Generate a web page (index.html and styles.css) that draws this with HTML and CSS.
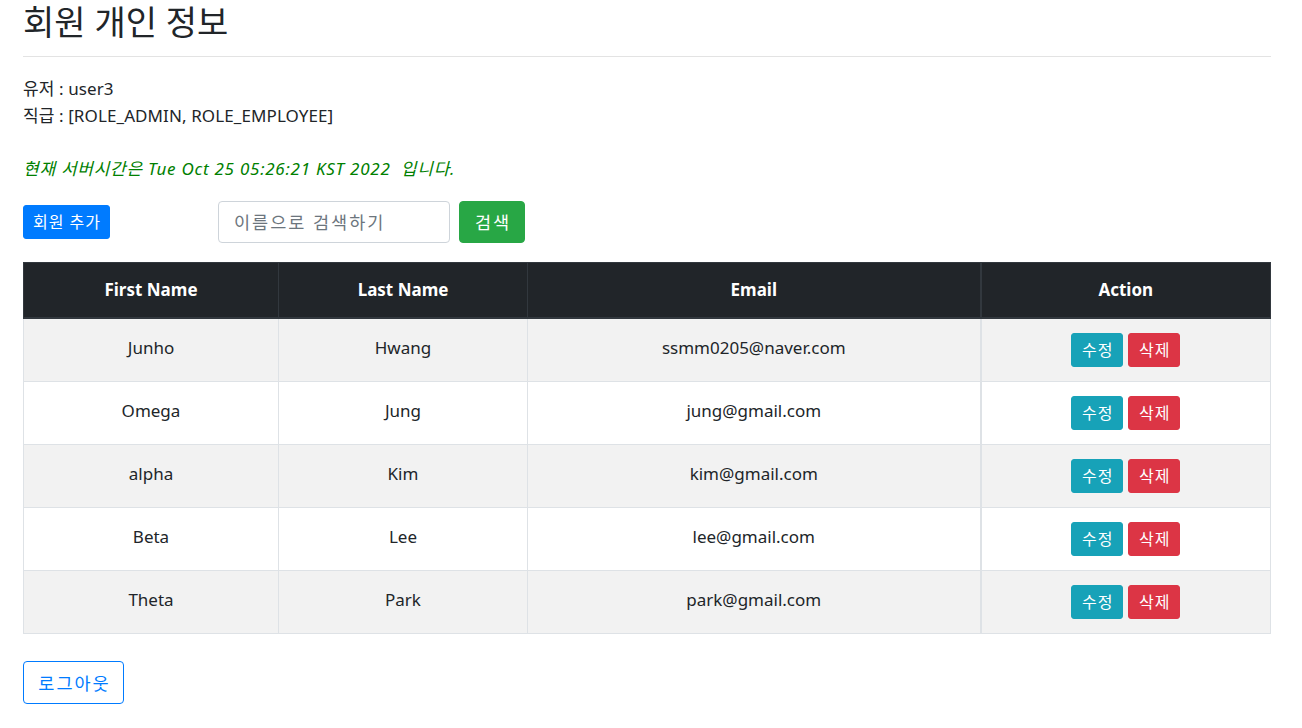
FILE: index.html
```html
<!DOCTYPE html>
<html lang="ko">
<head>
<meta charset="utf-8">
<title>회원 개인 정보</title>
<link rel="stylesheet" href="styles.css">
</head>
<body>
<div class="page">
  <h2 class="title">회원 개인 정보</h2>
  <hr class="divider">
  <div class="info">
    <div>유저 : user3</div>
    <div>직급 : [ROLE_ADMIN, ROLE_EMPLOYEE]</div>
  </div>
  <p class="server-time">현재 서버시간은 Tue Oct 25 05:26:21 KST 2022 &nbsp;입니다.</p>
  <div class="toolbar">
    <button class="btn btn-sm btn-primary">회원 추가</button>
    <form class="search">
      <input class="search-input" type="text" placeholder="이름으로 검색하기">
      <button class="btn btn-success" type="button">검색</button>
    </form>
  </div>
  <table class="members">
    <colgroup>
      <col class="c1"><col class="c2"><col class="c3"><col class="c4">
    </colgroup>
    <thead>
      <tr><th>First Name</th><th>Last Name</th><th>Email</th><th class="action">Action</th></tr>
    </thead>
    <tbody>
      <tr><td>Junho</td><td>Hwang</td><td>ssmm0205@naver.com</td><td class="action"><button class="btn btn-sm btn-info">수정</button><button class="btn btn-sm btn-danger">삭제</button></td></tr>
      <tr><td>Omega</td><td>Jung</td><td>jung@gmail.com</td><td class="action"><button class="btn btn-sm btn-info">수정</button><button class="btn btn-sm btn-danger">삭제</button></td></tr>
      <tr><td>alpha</td><td>Kim</td><td>kim@gmail.com</td><td class="action"><button class="btn btn-sm btn-info">수정</button><button class="btn btn-sm btn-danger">삭제</button></td></tr>
      <tr><td>Beta</td><td>Lee</td><td>lee@gmail.com</td><td class="action"><button class="btn btn-sm btn-info">수정</button><button class="btn btn-sm btn-danger">삭제</button></td></tr>
      <tr><td>Theta</td><td>Park</td><td>park@gmail.com</td><td class="action"><button class="btn btn-sm btn-info">수정</button><button class="btn btn-sm btn-danger">삭제</button></td></tr>
    </tbody>
  </table>
  <button class="btn btn-outline-primary logout">로그아웃</button>
</div>
</body>
</html>
```
FILE: styles.css
```css
html, body {
  margin: 0;
  padding: 0;
  background: #fff;
}
body {
  font-family: "Noto Sans", "Noto Sans CJK KR", sans-serif;
  font-size: 17px;
  line-height: 27px;
  color: #212529;
}
.page {
  width: 1248px;
  padding: 0 0 0 23px;
  display: flex;
  flex-direction: column;
  align-items: flex-start;
}
.title {
  margin: 1px 0 0;
  font-size: 34px;
  font-weight: 400;
  line-height: 42px;
  color: #212529;
}
.divider {
  align-self: stretch;
  margin: 13px 0 18px;
  border: 0;
  border-top: 1px solid #e3e3e3;
  height: 0;
}
.info {
  display: flex;
  flex-direction: column;
  letter-spacing: 0.1px;
}
.server-time {
  margin: 27px 0 0;
  font-style: italic;
  color: #008000;
  line-height: 26px;
  letter-spacing: 0.75px;
}
.toolbar {
  margin-top: 19px;
  display: flex;
  align-items: center;
}
.search {
  margin: 0 0 0 108px;
  display: flex;
  gap: 9px;
}
.search-input {
  box-sizing: border-box;
  width: 232px;
  height: 42px;
  padding: 0 14px 0 15px;
  border: 1px solid #ced4da;
  border-radius: 4px;
  font-family: inherit;
  font-size: 17.5px;
  letter-spacing: 2px;
  color: #495057;
}
.search-input::placeholder {
  color: #6c757d;
}
.btn {
  box-sizing: border-box;
  font-family: inherit;
  font-size: 17.5px;
  line-height: 24px;
  letter-spacing: 2px;
  border: 1px solid transparent;
  border-radius: 4px;
  padding: 0 0 0 2px;
  height: 42px;
  color: #fff;
  cursor: pointer;
}
.btn-sm {
  font-size: 16px;
  letter-spacing: 1px;
  height: 34px;
  padding: 0 0 0 1px;
  border-radius: 3px;
}
.btn-primary { background: #007bff; border-color: #007bff; }
.btn-success { background: #28a745; border-color: #28a745; width: 66px; }
.btn-info { background: #17a2b8; border-color: #17a2b8; width: 52px; }
.btn-danger { background: #dc3545; border-color: #dc3545; width: 52px; }
.toolbar .btn-primary { width: 87px; }
.btn-outline-primary {
  background: #fff;
  border-color: #007bff;
  color: #007bff;
  width: 101px;
  height: 43px;
}
.members {
  margin-top: 19px;
  width: 1248px;
  border-collapse: collapse;
  table-layout: fixed;
  text-align: center;
}
.c1 { width: 255px; }
.c2 { width: 249px; }
.c3 { width: 453px; }
.c4 { width: 290px; }
.members th {
  background: #212529;
  color: #fff;
  font-weight: 700;
  height: 52px;
  padding: 0 0 2px;
  border: 1px solid #32383e;
  border-bottom-width: 2px;
  vertical-align: middle;
}
.members td {
  height: 56px;
  padding: 0 0 6px;
  border: 1px solid #dee2e6;
  vertical-align: middle;
}
.members td.action {
  height: 62px;
  padding: 0;
}
.members th.action, .members td.action {
  border-left-width: 2px;
}
.members tbody tr:nth-child(odd) td {
  background: #f2f2f2;
}
.members td.action .btn + .btn {
  margin-left: 5px;
}
.logout {
  margin-top: 27px;
}
```
